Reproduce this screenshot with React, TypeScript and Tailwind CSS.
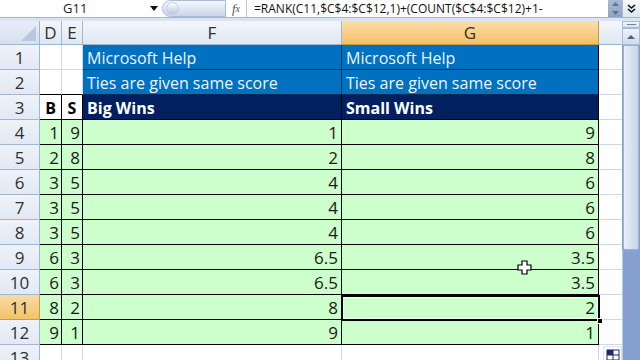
import React from "react";

const COLS = [40, 22, 21, 259, 257, 23];
const D = [1, 2, 3, 3, 3, 6, 6, 8, 9];
const E = [9, 8, 5, 5, 5, 3, 3, 2, 1];
const F = ["1", "2", "4", "4", "4", "6.5", "6.5", "8", "9"];
const G = ["9", "8", "6", "6", "6", "3.5", "3.5", "2", "1"];

function RowHeader({ n, sel }: { n: number; sel?: boolean }) {
  return (
    <div
      className={
        "w-[40px] shrink-0 h-full flex items-center justify-center pt-[2px] border-r border-b text-[17px] text-[#303030] " +
        (sel
          ? "bg-gradient-to-b from-[#f9dba3] to-[#f2c366] border-[#c29b52]"
          : "bg-gradient-to-b from-[#eef2f9] to-[#e2e9f4] border-[#9eb6ce]")
      }
    >
      {n}
    </div>
  );
}

function Cell({
  w,
  cls,
  children,
}: {
  w: string;
  cls: string;
  children?: React.ReactNode;
}) {
  return (
    <div className={w + " shrink-0 h-full flex items-center pt-[2px] border-r border-b " + cls}>
      {children}
    </div>
  );
}

export default function App() {
  return (
    <div
      className="w-[640px] h-[360px] overflow-hidden bg-white relative flex flex-col"
      style={{ fontFamily: '"Open Sans", "Noto Sans", sans-serif' }}
    >
      {/* Formula bar */}
      <div className="h-[18px] shrink-0 flex items-center bg-white border-b border-[#a4b6cf]">
        <div className="w-[145px] h-full flex items-center pl-[63px] text-[13px] text-[#222]">G11</div>
        <div className="w-[17px] h-full flex items-center justify-center">
          <svg width="8" height="5" viewBox="0 0 8 5">
            <path d="M0 0 H8 L4 5 Z" fill="#111" />
          </svg>
        </div>
        <div className="w-[64px] h-[17px] rounded-l-full rounded-r-[3px] bg-gradient-to-b from-[#f4f7fc] to-[#c9d6ea] border border-[#a9bcd6] relative flex items-center">
          <div className="w-[13px] h-[13px] rounded-full bg-gradient-to-b from-[#ffffff] to-[#b7c7de] border border-[#c0cee2] ml-[3px]" />
        </div>
        <div className="w-[20px] h-full flex items-center justify-center text-[13px] italic text-[#555]" style={{ fontFamily: '"Liberation Serif", serif' }}>
          f<span className="text-[10px]">x</span>
        </div>
        <div className="w-[1px] h-full bg-[#b9c6d8]" />
        <div className="flex-1 h-full flex items-center pl-[7px] text-[12px] text-[#111] whitespace-nowrap overflow-hidden">
          =RANK(C11,$C$4:$C$12,1)+(COUNT($C$4:$C$12)+1-
        </div>
        <div className="w-[14px] h-full flex flex-col bg-gradient-to-b from-[#a9bad4] to-[#8ea3c4]">
          <div className="flex-1 flex items-center justify-center">
            <svg width="7" height="4" viewBox="0 0 7 4"><path d="M0 4 L3.5 0 L7 4 Z" fill="#5f7396" /></svg>
          </div>
          <div className="flex-1 flex items-center justify-center">
            <svg width="7" height="4" viewBox="0 0 7 4"><path d="M0 0 L3.5 4 L7 0 Z" fill="#5f7396" /></svg>
          </div>
        </div>
        <div className="w-[18px] h-full flex items-center justify-center bg-gradient-to-b from-[#f7f9fd] to-[#dde6f2] border-l border-[#a9bcd6]">
          <svg width="9" height="10" viewBox="0 0 9 10">
            <path d="M1 1 L4.5 4 L8 1 M1 5 L4.5 8 L8 5" fill="none" stroke="#111" strokeWidth="1.6" />
          </svg>
        </div>
      </div>
      <div className="h-[3px] shrink-0 bg-[#dbe5f1]" />

      <div className="flex flex-1 min-h-0">
        <div className="w-[622px] flex flex-col">
          {/* Column header */}
          <div className="h-[24px] shrink-0 flex">
            <div className="w-[40px] h-full bg-gradient-to-b from-[#e8eef7] to-[#d6e0ee] border-r border-b border-[#9eb6ce] flex items-end justify-end p-[3px]">
              <svg width="15" height="15" viewBox="0 0 15 15"><path d="M15 0 V15 H0 Z" fill="#b9c8dc" /></svg>
            </div>
            {["D", "E", "F"].map((l, i) => (
              <div
                key={l}
                style={{ width: COLS[i + 1] }}
                className="h-full flex items-center justify-center pt-[1px] bg-gradient-to-b from-[#f3f6fb] to-[#e0e7f2] border-r border-b border-[#9eb6ce] text-[17px] text-[#303030]"
              >
                {l}
              </div>
            ))}
            <div className="w-[257px] h-full flex items-center justify-center pt-[1px] bg-gradient-to-b from-[#fadfac] to-[#f3c060] border-r border-b border-[#c29b52] text-[17px] text-[#303030]">
              G
            </div>
            <div className="w-[23px] h-full bg-gradient-to-b from-[#f3f6fb] to-[#e0e7f2] border-b border-[#9eb6ce]" />
          </div>

          {/* Row 1 */}
          <div className="h-[25px] shrink-0 flex">
            <RowHeader n={1} />
            <Cell w="w-[22px]" cls="border-[#d0d7e5]" />
            <Cell w="w-[21px]" cls="border-[#d0d7e5]" />
            <Cell w="w-[259px]" cls="bg-[#0070c0] border-[#0d2a55] text-[#eef5ff] text-[16px] pl-[4px]">Microsoft Help</Cell>
            <Cell w="w-[257px]" cls="bg-[#0070c0] border-black border-b-[#0d2a55] text-[#eef5ff] text-[16px] pl-[4px]">Microsoft Help</Cell>
            <Cell w="w-[23px]" cls="border-[#d0d7e5] border-r-0" />
          </div>
          {/* Row 2 */}
          <div className="h-[25px] shrink-0 flex">
            <RowHeader n={2} />
            <Cell w="w-[22px]" cls="border-[#d0d7e5] border-b-black" />
            <Cell w="w-[21px]" cls="border-[#d0d7e5] border-b-black" />
            <Cell w="w-[259px]" cls="bg-[#0070c0] border-[#0d2a55] text-[#eef5ff] text-[16px] pl-[4px]">Ties are given same score</Cell>
            <Cell w="w-[257px]" cls="bg-[#0070c0] border-black border-b-[#0d2a55] text-[#eef5ff] text-[16px] pl-[4px]">Ties are given same score</Cell>
            <Cell w="w-[23px]" cls="border-[#d0d7e5] border-r-0" />
          </div>
          {/* Row 3 */}
          <div className="h-[25px] shrink-0 flex">
            <RowHeader n={3} />
            <Cell w="w-[22px]" cls="border-black justify-center font-bold text-[16px] text-black">B</Cell>
            <Cell w="w-[21px]" cls="border-black justify-center font-bold text-[16px] text-black">S</Cell>
            <Cell w="w-[259px]" cls="bg-[#002060] border-black text-white font-bold text-[16px] pl-[4px]">Big Wins</Cell>
            <Cell w="w-[257px]" cls="bg-[#002060] border-black text-white font-bold text-[16px] pl-[4px]">Small Wins</Cell>
            <Cell w="w-[23px]" cls="border-[#d0d7e5] border-r-0" />
          </div>
          {D.map((d, i) => (
            <div key={i} className="h-[25px] shrink-0 flex">
              <RowHeader n={i + 4} sel={i + 4 === 11} />
              <Cell w="w-[22px]" cls="bg-[#ccffcc] border-black justify-end pr-[2px] text-[17px] text-[#1a1a1a]">{d}</Cell>
              <Cell w="w-[21px]" cls="bg-[#ccffcc] border-black justify-end pr-[2px] text-[17px] text-[#1a1a1a]">{E[i]}</Cell>
              <Cell w="w-[259px]" cls="bg-[#ccffcc] border-black justify-end pr-[3px] text-[17px] text-[#1a1a1a]">{F[i]}</Cell>
              <Cell w="w-[257px]" cls="bg-[#ccffcc] border-black justify-end pr-[3px] text-[17px] text-[#1a1a1a]">{G[i]}</Cell>
              <Cell w="w-[23px]" cls="border-[#d0d7e5] border-r-0" />
            </div>
          ))}
          {/* Row 13 */}
          <div className="h-[25px] shrink-0 flex">
            <RowHeader n={13} />
            <Cell w="w-[22px]" cls="border-[#d0d7e5]" />
            <Cell w="w-[21px]" cls="border-[#d0d7e5]" />
            <Cell w="w-[259px]" cls="border-[#d0d7e5]" />
            <Cell w="w-[257px]" cls="border-[#d0d7e5]" />
            <Cell w="w-[23px]" cls="border-[#d0d7e5] border-r-0" />
          </div>
        </div>

        {/* Vertical scrollbar */}
        <div className="w-[18px] flex flex-col bg-[#86a0cf]">
          <div className="h-[7px] shrink-0 bg-gradient-to-b from-[#f1f5fb] to-[#d7e1ef] border border-[#a9bcd6] flex items-center justify-center">
            <div className="w-[9px] h-[1px] bg-[#6d83a8]" />
          </div>
          <div className="h-[17px] shrink-0 bg-gradient-to-b from-[#eef3fa] to-[#cfdbeb] border border-[#a9bcd6] flex items-center justify-center">
            <svg width="8" height="4" viewBox="0 0 8 4"><path d="M0 4 L4 0 L8 4 Z" fill="#4d6185" /></svg>
          </div>
          <div className="h-[205px] shrink-0 mx-[1px] rounded-[2px] bg-gradient-to-r from-[#e9eff8] to-[#c8d5e8] border border-[#9fb3d0]" />
          <div className="flex-1 border-l border-[#b8c9e4]" />
        </div>
      </div>

      {/* Selection of G11 */}
      <div className="absolute left-[341px] top-[295px] w-[259px] h-[26px] border-2 border-black pointer-events-none">
        <div className="absolute inset-0 border border-white/70" />
      </div>
      <div className="absolute left-[597px] top-[318px] w-[6px] h-[6px] bg-black border border-white" />

      {/* Mouse cursor */}
      <svg className="absolute left-[517px] top-[260px]" width="15" height="15" viewBox="0 0 15 15">
        <path d="M5 1 H10 V5 H14 V10 H10 V14 H5 V10 H1 V5 H5 Z" fill="#fff" stroke="#000" strokeWidth="1.2" />
      </svg>

      {/* Auto fill options button */}
      <div className="absolute left-[603px] top-[346px] w-[19px] h-[16px] bg-[#fdfdfd] border border-[#dfe5ee] flex items-start justify-center pt-[2px]">
        <svg width="14" height="12" viewBox="0 0 14 12">
          <rect x="1" y="1" width="6" height="5" fill="#1c2a6b" />
          <rect x="1" y="1" width="12" height="10" fill="none" stroke="#1c2a6b" strokeWidth="1" />
          <path d="M7 1 V11 M1 6 H13" stroke="#1c2a6b" strokeWidth="1" />
        </svg>
      </div>
    </div>
  );
}
